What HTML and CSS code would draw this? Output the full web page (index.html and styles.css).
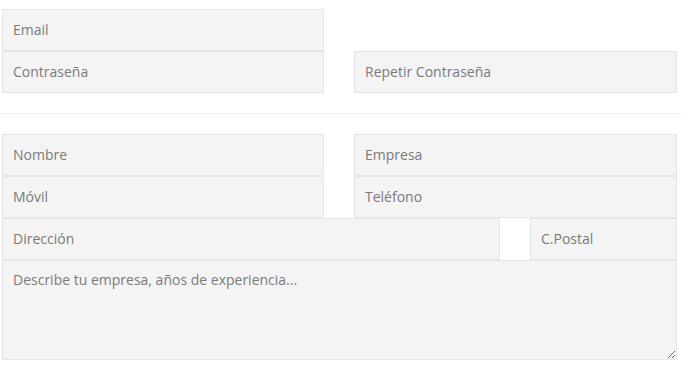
FILE: index.html
```html
<!DOCTYPE html>
<html>
<head>
<meta charset="utf-8">
<link rel="stylesheet" href="styles.css">
</head>
<body>
<form class="form">
  <div class="grid-two">
    <input class="field" type="email" placeholder="Email">
    <div></div>
    <input class="field" type="password" placeholder="Contraseña">
    <input class="field" type="password" placeholder="Repetir Contraseña">
  </div>
  <hr class="sep">
  <div class="grid-two">
    <input class="field" type="text" placeholder="Nombre">
    <input class="field" type="text" placeholder="Empresa">
    <input class="field" type="text" placeholder="Móvil">
    <input class="field" type="text" placeholder="Teléfono">
  </div>
  <div class="grid-addr">
    <input class="field" type="text" placeholder="Dirección">
    <input class="field" type="text" placeholder="C.Postal">
  </div>
  <textarea class="field area" placeholder="Describe tu empresa, años de experiencia..."></textarea>
</form>
</body>
</html>
```
FILE: styles.css
```css
* { box-sizing: border-box; }
html, body { margin: 0; padding: 0; background: #fff; }
body { font-family: "Open Sans", "Liberation Sans", sans-serif; font-size: 14px; color: #777; }
.form { padding: 9px 0 0 0; width: 682px; }
.grid-two {
  display: grid;
  grid-template-columns: 322px 323px;
  column-gap: 30px;
  margin-left: 2px;
}
.grid-addr {
  display: grid;
  grid-template-columns: 498px 147px;
  column-gap: 30px;
  margin-left: 2px;
}
.field {
  display: block;
  width: 100%;
  height: 42px;
  margin: 0;
  border: 1px solid #e6e6e6;
  background: #f4f4f4;
  font-family: "Open Sans", "Liberation Sans", sans-serif;
  font-size: 14px;
  color: #777;
  padding: 0 10px 2px 10px;
  outline: none;
  border-radius: 0;
}
.field::placeholder { color: #7a7a7a; opacity: 1; }
.sep {
  border: 0;
  border-top: 1px solid #ececec;
  margin: 20px 1px 20px 0;
  height: 0;
}
.area {
  width: 675px;
  height: 100px;
  margin-left: 2px;
  padding: 9px 10px;
  line-height: 20px;
  resize: vertical;
}
```
